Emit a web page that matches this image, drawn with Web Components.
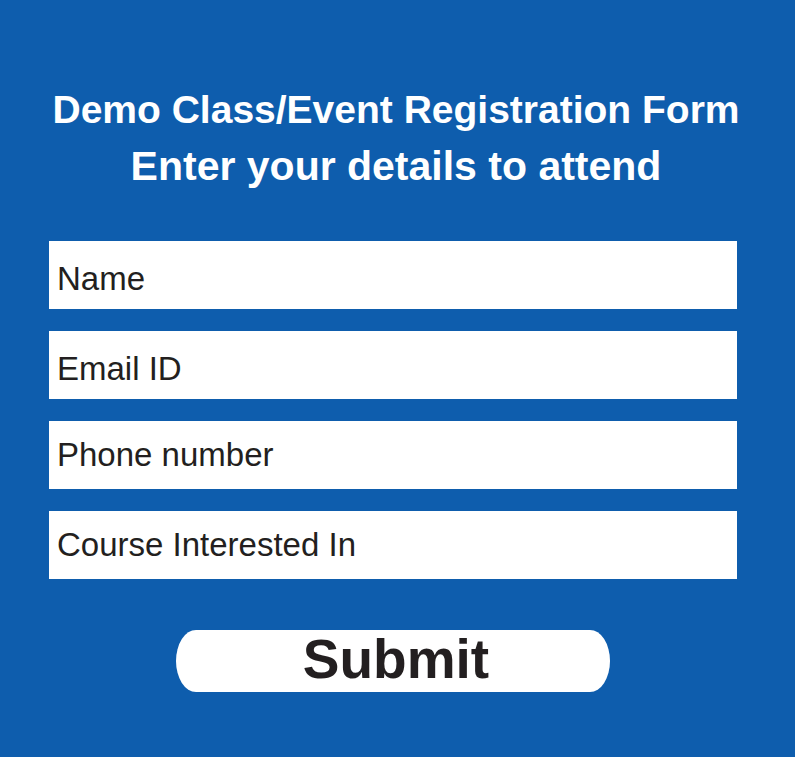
<!DOCTYPE html>
<html lang="en">
<head>
<meta charset="utf-8">
<meta name="viewport" content="width=device-width, initial-scale=1">
<title>Demo Class/Event Registration Form</title>
<style>
  html { background: #0e5dad; }
  body { margin: 0; font-family: "Liberation Sans", Arial, sans-serif; color: #231f20; }
</style>
</head>
<body>
<registration-form>
  <form-heading slot="heading">
    Demo Class/Event Registration Form
    <span slot="subtitle">Enter your details to attend</span>
  </form-heading>
  <form-field label="Name" name="name" type="text"></form-field>
  <form-field label="Email ID" name="email" type="email"></form-field>
  <form-field raised label="Phone number" name="phone" type="tel"></form-field>
  <form-field raised label="Course Interested In" name="course" type="text"></form-field>
  <submit-button slot="action">Submit</submit-button>
</registration-form>

<script>
  class RegistrationForm extends HTMLElement {
    constructor() {
      super();
      this.attachShadow({ mode: "open" }).innerHTML = `
        <style>
          :host { display: block; }
          form { display: flex; flex-direction: column; padding: 82px 58px 64px 49px; }
          .fields { display: flex; flex-direction: column; gap: 22px; margin: 46px 0 51px; }
        </style>
        <form>
          <slot name="heading"></slot>
          <div class="fields"><slot></slot></div>
          <slot name="action"></slot>
        </form>`;
    }
  }

  class FormHeading extends HTMLElement {
    constructor() {
      super();
      this.attachShadow({ mode: "open" }).innerHTML = `
        <style>
          :host { display: block; padding-left: 6px; color: #fff; text-align: center; }
          h1, p { margin: 0; font-weight: bold; }
          h1 { font-size: 39px; line-height: 56px; }
          p { font-size: 41px; line-height: 57px; }
          @media (min-width: 780px) { h1 { display: flex; justify-content: center; white-space: nowrap; } }
        </style>
        <h1><slot></slot></h1>
        <p><slot name="subtitle"></slot></p>`;
    }
  }

  class FormField extends HTMLElement {
    constructor() {
      super();
      this.attachShadow({ mode: "open" }).innerHTML = `
        <style>
          :host { display: block; }
          .box { display: flex; align-items: center; gap: 12px; min-height: 68px; padding: 8px 8px 0; box-sizing: border-box; background: #fff; }
          :host([raised]) .box { padding: 0 8px; }
          label, input { font-size: 33px; line-height: 40px; }
          input { flex: 1; min-width: 0; padding: 0; border: 0; outline: 0; background: transparent; color: inherit; font-family: inherit; }
          .box:focus-within { outline: 3px solid #8fc1f5; }
        </style>
        <div class="box"><label for="control"></label><input id="control"></div>`;
    }
    connectedCallback() {
      this.shadowRoot.querySelector("label").textContent = this.getAttribute("label");
      const input = this.shadowRoot.querySelector("input");
      input.type = this.getAttribute("type");
      input.name = this.getAttribute("name");
    }
  }

  class SubmitButton extends HTMLElement {
    constructor() {
      super();
      this.attachShadow({ mode: "open" }).innerHTML = `
        <style>
          :host { display: flex; justify-content: center; }
          button { width: 63%; min-height: 62px; padding: 0 8px 4px 14px; border: 0; border-radius: 20px / 31px; background: #fff; color: inherit; font-family: inherit; font-size: 55px; font-weight: bold; line-height: 58px; cursor: pointer; }
        </style>
        <button type="submit"><slot></slot></button>`;
    }
  }

  customElements.define("registration-form", RegistrationForm);
  customElements.define("form-heading", FormHeading);
  customElements.define("form-field", FormField);
  customElements.define("submit-button", SubmitButton);
</script>
</body>
</html>
